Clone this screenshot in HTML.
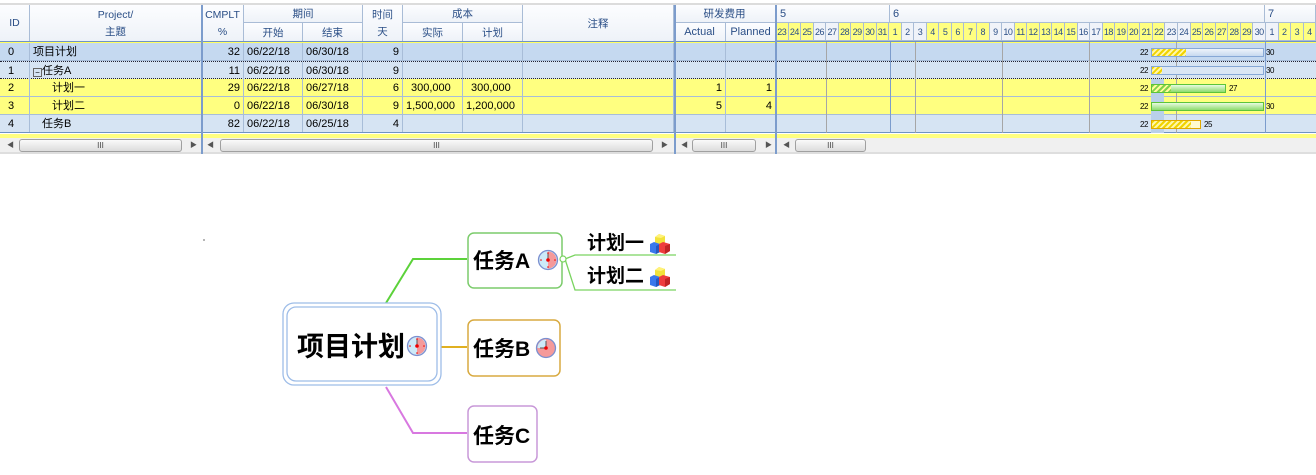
<!DOCTYPE html>
<html><head><meta charset="utf-8">
<style>
*{margin:0;padding:0;box-sizing:border-box}
body{width:1316px;height:475px;background:#fff;position:relative;overflow:hidden;font-family:"Liberation Sans","Noto Sans CJK SC",sans-serif;font-size:11px;color:#000}
.a{position:absolute}
.h{position:absolute;background:linear-gradient(#fcfdff,#eef2f8);border-right:1px solid #a9bcd6;border-bottom:1px solid #a9bcd6;color:#2a4e86;text-align:center;font-size:10.5px;display:flex;align-items:center;justify-content:center}
.h2{flex-direction:column;line-height:17px;padding-top:1px}
.r{position:absolute;left:0;width:1316px;height:18px;border-bottom:1px solid #a8bdd8}
.c{position:absolute;top:0;height:17px;line-height:18px;border-right:1px solid #a8bdd8;padding:0 3px;font-size:11px;white-space:nowrap}
.rt{text-align:right}
.days{position:absolute;left:776px;top:23px;width:540px;height:18px;display:flex}
.days div{flex:1;border-right:1px solid #a9bcd6;border-bottom:1px solid #a9bcd6;background:#ffff80;font-size:9px;color:#2a4e86;text-align:center;line-height:18px;overflow:hidden;letter-spacing:-0.5px}
.days div.w{background:#f0f3f9}
.vl{position:absolute;top:42px;height:91px;width:1px;background:#a6a6a6}
.bar{position:absolute;height:9px}
.lbl{position:absolute;font-size:8px;letter-spacing:-0.5px}
.hatch{background:repeating-linear-gradient(135deg,#f1d400 0 2px,#fff6a8 2px 4px)}
.sb{position:absolute;top:139px;height:13px;border:1px solid #a0a0a0;border-radius:3px;background:linear-gradient(#fafafa,#dcdcdc);font-size:8px;text-align:center;line-height:11px;color:#444}
.ar{position:absolute;top:140px;font-size:7px;color:#555}
</style></head><body>
<div class="a" style="left:0;top:3px;width:1316px;height:2px;background:#dcdcdc"></div>
<div class="h" style="left:0;top:5px;width:30px;height:37px">ID</div>
<div class="h h2" style="left:30px;top:5px;width:172px;height:37px"><span>Project/</span><span>主题</span></div>
<div class="h h2" style="left:202px;top:5px;width:42px;height:37px"><span>CMPLT</span><span>%</span></div>
<div class="h" style="left:244px;top:5px;width:119px;height:18px">期间</div>
<div class="h" style="left:244px;top:23px;width:59px;height:19px">开始</div>
<div class="h" style="left:303px;top:23px;width:60px;height:19px">结束</div>
<div class="h h2" style="left:363px;top:5px;width:40px;height:37px"><span>时间</span><span>天</span></div>
<div class="h" style="left:403px;top:5px;width:120px;height:18px">成本</div>
<div class="h" style="left:403px;top:23px;width:60px;height:19px">实际</div>
<div class="h" style="left:463px;top:23px;width:60px;height:19px">计划</div>
<div class="h" style="left:523px;top:5px;width:151px;height:37px">注释</div>
<div class="h" style="left:674px;top:5px;width:102px;height:18px">研发费用</div>
<div class="h" style="left:674px;top:23px;width:52px;height:19px;font-size:11px">Actual</div>
<div class="h" style="left:726px;top:23px;width:50px;height:19px;font-size:11px">Planned</div>
<div class="h" style="left:776px;top:5px;width:114px;height:18px;justify-content:flex-start;padding-left:4px;font-size:11px">5</div>
<div class="h" style="left:890px;top:5px;width:375px;height:18px;justify-content:flex-start;padding-left:3px;font-size:11px">6</div>
<div class="h" style="left:1265px;top:5px;width:51px;height:18px;justify-content:flex-start;padding-left:3px;font-size:11px">7</div>
<div class="days"><div>23</div><div>24</div><div>25</div><div class="w">26</div><div class="w">27</div><div>28</div><div>29</div><div>30</div><div>31</div><div>1</div><div class="w">2</div><div class="w">3</div><div>4</div><div>5</div><div>6</div><div>7</div><div>8</div><div class="w">9</div><div class="w">10</div><div>11</div><div>12</div><div>13</div><div>14</div><div>15</div><div class="w">16</div><div class="w">17</div><div>18</div><div>19</div><div>20</div><div>21</div><div>22</div><div class="w">23</div><div class="w">24</div><div>25</div><div>26</div><div>27</div><div>28</div><div>29</div><div class="w">30</div><div class="w">1</div><div>2</div><div>3</div><div>4</div></div>
<div class="a" style="left:0;top:41px;width:1316px;height:1px;background:#6f93c4"></div>
<div class="a" style="left:0;top:42px;width:1316px;height:1px;background:#ffff60"></div>
<div class="r" style="top:43px;background:#c5d9f0">
<div class="c" style="left:0;width:30px;padding-left:8px">0</div><div class="c" style="left:30px;width:172px">项目计划</div><div class="c rt" style="left:202px;width:42px">32</div><div class="c" style="left:244px;width:59px">06/22/18</div><div class="c" style="left:303px;width:60px">06/30/18</div><div class="c rt" style="left:363px;width:40px">9</div><div class="c" style="left:403px;width:60px"></div><div class="c" style="left:463px;width:60px"></div><div class="c" style="left:523px;width:151px"></div><div class="c" style="left:674px;width:52px"></div><div class="c" style="left:726px;width:50px"></div></div>
<div class="r" style="top:61px;background:#d6e4f3;border-top:1px dotted #223;border-bottom:1px dotted #223">
<div class="c" style="left:0;width:30px;padding-left:8px">1</div><div class="c" style="left:30px;width:172px"><span style="display:inline-block;width:9px;height:9px;border:1px solid #666;font-size:8px;line-height:7px;text-align:center;vertical-align:-1px">−</span>任务A</div><div class="c rt" style="left:202px;width:42px">11</div><div class="c" style="left:244px;width:59px">06/22/18</div><div class="c" style="left:303px;width:60px">06/30/18</div><div class="c rt" style="left:363px;width:40px">9</div><div class="c" style="left:403px;width:60px"></div><div class="c" style="left:463px;width:60px"></div><div class="c" style="left:523px;width:151px"></div><div class="c" style="left:674px;width:52px"></div><div class="c" style="left:726px;width:50px"></div></div>
<div class="r" style="top:79px;background:#ffff80">
<div class="c" style="left:0;width:30px;padding-left:8px">2</div><div class="c" style="left:30px;width:172px;padding-left:22px">计划一</div><div class="c rt" style="left:202px;width:42px">29</div><div class="c" style="left:244px;width:59px">06/22/18</div><div class="c" style="left:303px;width:60px">06/27/18</div><div class="c rt" style="left:363px;width:40px">6</div><div class="c" style="left:403px;width:60px;padding-left:8px">300,000</div><div class="c" style="left:463px;width:60px;padding-left:8px">300,000</div><div class="c" style="left:523px;width:151px"></div><div class="c rt" style="left:674px;width:52px">1</div><div class="c rt" style="left:726px;width:50px">1</div></div>
<div class="r" style="top:97px;background:#ffff80">
<div class="c" style="left:0;width:30px;padding-left:8px">3</div><div class="c" style="left:30px;width:172px;padding-left:22px">计划二</div><div class="c rt" style="left:202px;width:42px">0</div><div class="c" style="left:244px;width:59px">06/22/18</div><div class="c" style="left:303px;width:60px">06/30/18</div><div class="c rt" style="left:363px;width:40px">9</div><div class="c" style="left:403px;width:60px;padding-left:3px">1,500,000</div><div class="c" style="left:463px;width:60px;padding-left:3px">1,200,000</div><div class="c" style="left:523px;width:151px"></div><div class="c rt" style="left:674px;width:52px">5</div><div class="c rt" style="left:726px;width:50px">4</div></div>
<div class="r" style="top:115px;background:#d6e4f3;border-bottom:1px solid #6f93c4">
<div class="c" style="left:0;width:30px;padding-left:8px">4</div><div class="c" style="left:30px;width:172px;padding-left:12px">任务B</div><div class="c rt" style="left:202px;width:42px">82</div><div class="c" style="left:244px;width:59px">06/22/18</div><div class="c" style="left:303px;width:60px">06/25/18</div><div class="c rt" style="left:363px;width:40px">4</div><div class="c" style="left:403px;width:60px"></div><div class="c" style="left:463px;width:60px"></div><div class="c" style="left:523px;width:151px"></div><div class="c" style="left:674px;width:52px"></div><div class="c" style="left:726px;width:50px"></div></div>
<div class="a" style="left:0;top:134px;width:1316px;height:4px;background:#ffff80"></div>
<div class="a" style="left:1151px;top:79px;width:13px;height:54px;background:#b9d0ea"></div>
<div class="vl" style="left:826px"></div><div class="vl" style="left:890px;background:#7c9ccc"></div><div class="vl" style="left:915px"></div><div class="vl" style="left:1002px"></div><div class="vl" style="left:1089px"></div><div class="vl" style="left:1176px"></div><div class="vl" style="left:1265px;background:#7c9ccc"></div>
<div class="lbl" style="left:1140px;top:48px">22</div><div class="bar" style="left:1151px;top:48px;width:113px;border:1px solid #86a8d6;background:linear-gradient(#eef4fb,#c7d9ef)"></div><div class="bar hatch" style="left:1152px;top:49px;width:34px;height:7px"></div><div class="lbl" style="left:1266px;top:48px">30</div>
<div class="lbl" style="left:1140px;top:66px">22</div><div class="bar" style="left:1151px;top:66px;width:113px;border:1px solid #86a8d6;background:#dae6f4"></div><div class="bar hatch" style="left:1152px;top:67px;width:10px;height:7px"></div><div class="lbl" style="left:1266px;top:66px">30</div>
<div class="lbl" style="left:1140px;top:84px">22</div><div class="bar" style="left:1151px;top:84px;width:75px;border:1px solid #5cc43a;background:linear-gradient(#e8fae0,#8edc6e)"></div><div class="bar" style="left:1152px;top:85px;width:19px;height:7px;background:repeating-linear-gradient(135deg,#7fd34a 0 2px,#fffb9a 2px 4px)"></div><div class="lbl" style="left:1229px;top:84px">27</div>
<div class="lbl" style="left:1140px;top:102px">22</div><div class="bar" style="left:1151px;top:102px;width:113px;border:1px solid #5cc43a;background:linear-gradient(#e8fae0,#8edc6e)"></div><div class="lbl" style="left:1266px;top:102px">30</div>
<div class="lbl" style="left:1140px;top:120px">22</div><div class="bar" style="left:1151px;top:120px;width:50px;border:1px solid #e0a800;background:#fffbd0"></div><div class="bar hatch" style="left:1152px;top:121px;width:39px;height:7px"></div><div class="lbl" style="left:1204px;top:120px">25</div>
<div class="a" style="left:201px;top:5px;width:2px;height:149px;background:#7c9ccc"></div>
<div class="a" style="left:674px;top:5px;width:2px;height:149px;background:#7c9ccc"></div>
<div class="a" style="left:775px;top:5px;width:2px;height:149px;background:#7c9ccc"></div>
<div class="a" style="left:0;top:138px;width:1316px;height:16px;background:#f0f0f0;border-bottom:2px solid #dedede"></div>
<div class="a" style="left:201px;top:134px;width:2px;height:20px;background:#7c9ccc"></div>
<div class="a" style="left:674px;top:134px;width:2px;height:20px;background:#7c9ccc"></div>
<div class="a" style="left:775px;top:134px;width:2px;height:20px;background:#7c9ccc"></div>
<div class="ar" style="left:7px">◀</div><div class="sb" style="left:19px;width:163px">III</div><div class="ar" style="left:190px">▶</div>
<div class="ar" style="left:207px">◀</div><div class="sb" style="left:220px;width:433px">III</div><div class="ar" style="left:661px">▶</div>
<div class="ar" style="left:681px">◀</div><div class="sb" style="left:692px;width:64px">III</div><div class="ar" style="left:765px">▶</div>
<div class="ar" style="left:783px">◀</div><div class="sb" style="left:795px;width:71px">III</div>
<svg class="a" style="left:0;top:0" width="1316" height="475">
<defs>
<g id="clk"><circle r="9.5" fill="#cdeaf8" stroke="#7b8fd0" stroke-width="1.3"/><path d="M0 -8.5 A8.5 8.5 0 0 1 0 8.5 Z" fill="#f59a9a"/><line x1="0" y1="0" x2="0" y2="-7" stroke="#555" stroke-width="1"/><circle r="1.8" fill="#e00"/><circle cx="0" cy="-7" r="0.8" fill="#e00"/><circle cx="7" cy="0" r="0.8" fill="#e00"/><circle cx="0" cy="7" r="0.8" fill="#e00"/><circle cx="-7" cy="0" r="0.8" fill="#e00"/></g>
<g id="clkb"><circle r="9.5" fill="#f59a9a" stroke="#7b8fd0" stroke-width="1.3"/><path d="M0 -8.5 A8.5 8.5 0 0 0 -8.5 0 L0 0 Z" fill="#cdeaf8"/><line x1="0" y1="0" x2="0" y2="-7" stroke="#555"/><line x1="0" y1="0" x2="-6" y2="0" stroke="#555"/><circle r="1.8" fill="#e00"/></g>
<g id="cube">
<path d="M5 3 L9 0 L15 2 L15 10 L11 12 L5 10 Z" fill="#f2e23a"/><path d="M9 0 L15 2 L11 4 L5 3 Z" fill="#fff27a"/>
<path d="M0 10 L4 8 L10 10 L10 18 L6 20 L0 18 Z" fill="#3a78ec"/><path d="M6 12 L10 10 L10 18 L6 20 Z" fill="#2558c0"/>
<path d="M9 10 L13 8 L20 10 L20 17 L15 20 L9 18 Z" fill="#ee3d3d"/><path d="M15 12 L20 10 L20 17 L15 20 Z" fill="#c02424"/>
</g>
</defs>
<circle cx="204" cy="240" r="0.6" fill="#000"/>
<polyline points="386,303 413,259 467,259" fill="none" stroke="#5cd23a" stroke-width="2"/>
<line x1="441" y1="347" x2="467" y2="347" stroke="#e0b020" stroke-width="2"/>
<polyline points="386,387 413,433 467,433" fill="none" stroke="#d878e0" stroke-width="2"/>
<polyline points="565,259 575,255 676,255" fill="none" stroke="#7ad460" stroke-width="1.3"/>
<polyline points="565,259 575,290 676,290" fill="none" stroke="#7ad460" stroke-width="1.3"/>
<rect x="283" y="303" width="158" height="82" rx="11" fill="#fff" stroke="#9ebde8" stroke-width="1.3"/>
<rect x="287" y="307" width="150" height="74" rx="9" fill="#fff" stroke="#9ebde8" stroke-width="1.3"/>
<rect x="468" y="233" width="94" height="55" rx="6" fill="#fff" stroke="#7ccc6c" stroke-width="1.5"/>
<rect x="468" y="320" width="92" height="56" rx="6" fill="#fff" stroke="#d8aa40" stroke-width="1.5"/>
<rect x="468" y="406" width="69" height="56" rx="6" fill="#fff" stroke="#c898d8" stroke-width="1.5"/>
<circle cx="563" cy="259" r="3" fill="#fff" stroke="#7ad460" stroke-width="1.2"/>
<g font-family="Liberation Sans,Noto Sans CJK SC,sans-serif" font-weight="bold" fill="#000">
<text x="297" y="356" font-size="27">项目计划</text>
<text x="473" y="268" font-size="21">任务A</text>
<text x="473" y="356" font-size="21">任务B</text>
<text x="473" y="443" font-size="21">任务C</text>
<text x="587" y="249" font-size="19">计划一</text>
<text x="587" y="282" font-size="19">计划二</text>
</g>
<use href="#clk" x="417" y="346"/>
<use href="#clk" x="548" y="260"/>
<use href="#clkb" x="546" y="348"/>
<use href="#cube" x="650" y="234"/>
<use href="#cube" x="650" y="267"/>
</svg>
</body></html>
